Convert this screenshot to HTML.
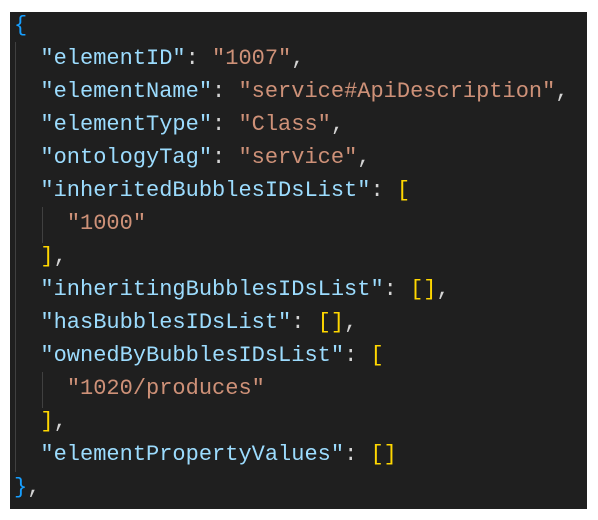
<!DOCTYPE html>
<html><head><meta charset="utf-8"><style>
html,body{margin:0;padding:0;background:#fff;width:598px;height:520px;overflow:hidden;position:relative}
.panel{position:absolute;left:10px;top:12px;width:577px;height:497px;background:#1f1f1f}
.code{position:absolute;left:14px;top:9px;font-family:"Liberation Mono",monospace;font-size:22px;line-height:33px;white-space:pre;color:#d4d4d4}
.k{color:#9cdcfe}.s{color:#ce9178}.y{color:#ffd700}.b{color:#179fff}
.g{position:absolute;width:1px;background:#404040}
</style></head><body>
<div class="panel"></div>
<div class="g" style="left:15px;top:42px;height:430px"></div>
<div class="g" style="left:42px;top:207px;height:36px"></div>
<div class="g" style="left:42px;top:372px;height:36px"></div>
<div class="code"><span class="b">{</span>
  <span class="k">"elementID"</span>: <span class="s">"1007"</span>,
  <span class="k">"elementName"</span>: <span class="s">"service#ApiDescription"</span>,
  <span class="k">"elementType"</span>: <span class="s">"Class"</span>,
  <span class="k">"ontologyTag"</span>: <span class="s">"service"</span>,
  <span class="k">"inheritedBubblesIDsList"</span>: <span class="y">[</span>
    <span class="s">"1000"</span>
  <span class="y">]</span>,
  <span class="k">"inheritingBubblesIDsList"</span>: <span class="y">[]</span>,
  <span class="k">"hasBubblesIDsList"</span>: <span class="y">[]</span>,
  <span class="k">"ownedByBubblesIDsList"</span>: <span class="y">[</span>
    <span class="s">"1020/produces"</span>
  <span class="y">]</span>,
  <span class="k">"elementPropertyValues"</span>: <span class="y">[]</span>
<span class="b">}</span>,</div>
</body></html>
